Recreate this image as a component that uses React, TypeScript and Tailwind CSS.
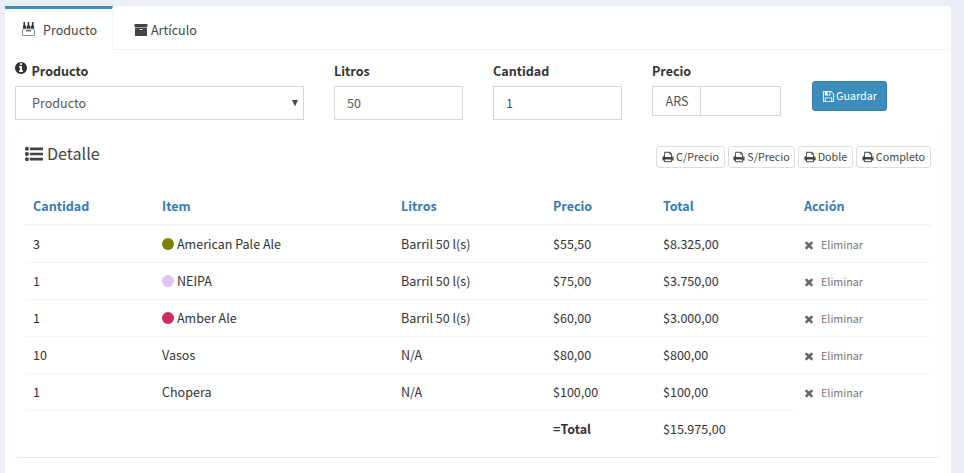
import type { ReactNode } from 'react';

type IconProps = { className: string };

function Glyph({ className, d }: IconProps & { d: string }) {
  return (
    <svg viewBox="0 0 1792 1792" fill="currentColor" className={`shrink-0 ${className}`} aria-hidden="true">
      <path d={d} />
    </svg>
  );
}

const PRINT =
  'M448 1536h896v-256h-896v256zm0-640h896v-384h-160q-40 0-68-28t-28-68v-160h-640v640zm1152 64q0-26-19-45t-45-19-45 19-19 45 19 45 45 19 45-19 19-45zm128 0v416q0 13-9.500 22.500t-22.500 9.500h-224v160q0 40-28 68t-68 28h-960q-40 0-68-28t-28-68v-160h-224q-13 0-22.500-9.500t-9.500-22.500v-416q0-79 56.500-135.500t135.500-56.500h64v-544q0-40 28-68t68-28h672q40 0 88 20t76 48l152 152q28 28 48 76t20 88v256h64q79 0 135.500 56.500t56.500 135.500z';
const FLOPPY =
  'M512 1536h768v-384h-768v384zm896 0h128v-896q0-14-10-38.500t-20-34.500l-281-281q-10-10-34-20t-39-10v416q0 40-28 68t-68 28h-576q-40 0-68-28t-28-68v-416h-128v1280h128v-416q0-40 28-68t68-28h832q40 0 68 28t28 68v416zm-384-928v-320q0-13-9.500-22.500t-22.500-9.500h-192q-13 0-22.500 9.500t-9.500 22.500v320q0 13 9.500 22.500t22.500 9.500h192q13 0 22.500-9.500t9.500-22.500zm640 32v928q0 40-28 68t-68 28h-1344q-40 0-68-28t-28-68v-1344q0-40 28-68t68-28h928q40 0 88 20t76 48l280 280q28 28 48 76t20 88z';
const ARCHIVE =
  'M1088 832q0-26-19-45t-45-19h-256q-26 0-45 19t-19 45 19 45 45 19h256q26 0 45-19t19-45zm576-192v960q0 26-19 45t-45 19h-1408q-26 0-45-19t-19-45v-960q0-26 19-45t45-19h1408q26 0 45 19t19 45zm64-448v256q0 26-19 45t-45 19h-1536q-26 0-45-19t-19-45v-256q0-26 19-45t45-19h1536q26 0 45 19t19 45z';
const INFO =
  'M1152 1376v-160q0-14-9-23t-23-9h-96v-512q0-14-9-23t-23-9h-320q-14 0-23 9t-9 23v160q0 14 9 23t23 9h96v320h-96q-14 0-23 9t-9 23v160q0 14 9 23t23 9h448q14 0 23-9t9-23zm-128-896v-160q0-14-9-23t-23-9h-192q-14 0-23 9t-9 23v160q0 14 9 23t23 9h192q14 0 23-9t9-23zm640 416q0 209-103 385.500t-279.500 279.500-385.500 103-385.500-103-279.500-279.500-103-385.500 103-385.500 279.500-279.500 385.500-103 385.500 103 279.500 279.500 103 385.500z';
const TIMES =
  'M1490 1322q0 40-28 68l-136 136q-28 28-68 28t-68-28l-294-294-294 294q-28 28-68 28t-68-28l-136-136q-28-28-28-68t28-68l294-294-294-294q-28-28-28-68t28-68l136-136q28-28 68-28t68 28l294 294 294-294q28-28 68-28t68 28l136 136q28 28 28 68t-28 68l-294 294 294 294q28 28 28 68z';

function ListIcon({ className }: IconProps) {
  return (
    <svg viewBox="0 0 1792 1792" fill="currentColor" className={`shrink-0 ${className}`} aria-hidden="true">
      {[384, 896, 1408].map((y) => (
        <g key={y}>
          <circle cx="192" cy={y} r="200" />
          <rect x="480" y={y - 130} width="1312" height="260" rx="32" />
        </g>
      ))}
    </svg>
  );
}

/* Crate with three bottles */
function CrateIcon({ className }: IconProps) {
  return (
    <svg viewBox="0 0 13 14" className={`shrink-0 ${className}`} aria-hidden="true">
      <path
        fill="#333"
        d="M1.500 0h1.600v3l1.100 1.400v2.300H.9V4.400L1.500 3zM5.700 0h1.600v3l.9 1.400v2.300H4.800V4.400L5.700 3zM9.900 0h1.600v3l.6 1.400v2.300H8.800V4.400L9.900 3z"
      />
      <path fill="none" stroke="#8a8a8a" d="M1.200 6.900h10.600l.7 1.200v4.900a.5.500 0 0 1-.5.500H1a.5.500 0 0 1-.5-.5V8.100z" />
      <path fill="#666" d="M4 8h5v1.400H4z" />
    </svg>
  );
}

function Field({ label, children, className }: { label: ReactNode; children: ReactNode; className: string }) {
  return (
    <div className={className}>
      <div className="flex h-[25px] items-start font-bold text-[#333]">{label}</div>
      {children}
    </div>
  );
}

const rows = [
  { qty: '3', item: 'American Pale Ale', dot: 'bg-[#7b800b]', liters: 'Barril 50 l(s)', price: '$55,50', total: '$8.325,00' },
  { qty: '1', item: 'NEIPA', dot: 'bg-[#dcc6f4]', liters: 'Barril 50 l(s)', price: '$75,00', total: '$3.750,00' },
  { qty: '1', item: 'Amber Ale', dot: 'bg-[#cc2d5b]', liters: 'Barril 50 l(s)', price: '$60,00', total: '$3.000,00' },
  { qty: '10', item: 'Vasos', dot: '', liters: 'N/A', price: '$80,00', total: '$800,00' },
  { qty: '1', item: 'Chopera', dot: '', liters: 'N/A', price: '$100,00', total: '$100,00' },
];

const headers = ['Cantidad', 'Item', 'Litros', 'Precio', 'Total', 'Acción'];
const printButtons = [
  { label: 'C/Precio', width: 'w-[69px]' },
  { label: 'S/Precio', width: 'w-[67px]' },
  { label: 'Doble', width: 'w-[55px]' },
  { label: 'Completo', width: 'w-[75px]' },
];

export default function App() {
  return (
    <div className="h-[473px] w-[964px] overflow-hidden bg-[#ebeff5] pl-[5px] pt-[6px] font-['Noto_Sans_CJK_SC','Source_Sans_Pro',sans-serif] text-[12.540px] leading-5 text-[#333]">
      <div className="h-[480px] w-[946px] rounded-tr-[3px] bg-white shadow-[0_1px_1px_rgba(0,0,0,0.1)]">
        <div className="flex h-[44px] text-[#444]">
          <div className="flex w-[108px] items-center border-r border-t-[3px] border-r-[#f4f4f4] border-t-[#3c8dbc] pl-[17px]">
            <CrateIcon className="mb-[2px] h-[14px] w-[13px]" />
            <span className="ml-2">Producto</span>
          </div>
          <div className="flex flex-1 items-center border-b border-b-[#f4f4f4] pl-[21px] pt-[4px]">
            <Glyph className="h-[14px] w-[14px]" d={ARCHIVE} />
            <span className="ml-[3px]">Artículo</span>
          </div>
        </div>

        <div className="px-[10px] pt-[11px]">
          <div className="flex h-[73px]">
            <Field
              className="w-[289px]"
              label={
                <>
                  <Glyph className="-ml-px h-[14px] w-[14px]" d={INFO} />
                  <span className="ml-[3.500px]">Producto</span>
                </>
              }
            >
              <div className="flex h-[34px] items-center justify-between border border-[#d2d6de] pl-4 pr-1 text-[#555]">
                <span>Producto</span>
                <svg viewBox="0 0 8 8" className="h-2 w-2" fill="#444" aria-hidden="true">
                  <path d="M1 1h6L4 7.200z" />
                </svg>
              </div>
            </Field>
            <Field className="ml-[30px] w-[129px]" label="Litros">
              <div className="flex h-[34px] items-center border border-[#d2d6de] pl-3 text-[#555]">50</div>
            </Field>
            <Field className="ml-[30px] w-[129px]" label="Cantidad">
              <div className="flex h-[34px] items-center border border-[#d2d6de] pl-3 text-[#555]">1</div>
            </Field>
            <Field className="ml-[30px] w-[129px]" label="Precio">
              <div className="flex h-[30px] items-center border border-[#d2d6de] text-[#555]">
                <div className="flex h-full w-[48px] items-center justify-center border-r border-[#d2d6de] pl-px">ARS</div>
              </div>
            </Field>
            <button className="ml-[31px] mt-[20px] flex h-[30px] w-[75px] items-center justify-center rounded-[3px] border border-[#367fa9] bg-[#3c8dbc] text-[10.750px] text-white">
              <Glyph className="h-[13px] w-[13px]" d={FLOPPY} />
              <span className="ml-px">Guardar</span>
            </button>
          </div>

          <div className="h-[323px] w-[926px] rounded-[3px] px-[10px] pt-[12px] shadow-[0_1px_1px_rgba(0,0,0,0.1),0_0_1px_rgba(0,0,0,0.05)]">
            <div className="flex h-[42px] items-start justify-between">
              <div className="-mt-[3px] flex items-center text-[16.130px] text-[#444]">
                <ListIcon className="mt-px h-[18px] w-[18px]" />
                <span className="ml-[4px]">Detalle</span>
              </div>
              <div className="flex gap-[3px]">
                {printButtons.map((b) => (
                  <button
                    key={b.label}
                    className={`flex h-[22px] items-center justify-center rounded-[3px] border border-[#ddd] bg-white text-[10.750px] text-[#444] ${b.width}`}
                  >
                    <Glyph className="h-3 w-3" d={PRINT} />
                    <span className="ml-[2px]">{b.label}</span>
                  </button>
                ))}
              </div>
            </div>

            <table className="w-[905px] table-fixed border-separate border-spacing-0 text-left">
              <colgroup>
                <col className="w-[129px]" />
                <col className="w-[239px]" />
                <col className="w-[152px]" />
                <col className="w-[110px]" />
                <col className="w-[141px]" />
                <col className="w-[134px]" />
              </colgroup>
              <thead>
                <tr>
                  {headers.map((h) => (
                    <th key={h} className="h-[38px] border-b-2 border-[#f4f4f4] px-2 py-0 font-bold text-[#337ab7]">
                      {h}
                    </th>
                  ))}
                </tr>
              </thead>
              <tbody className="[&_td]:h-[37px] [&_td]:px-2 [&_td]:py-0">
                {rows.map((r, i) => (
                  <tr key={r.item} className="[&>td]:border-b [&>td]:border-[#f4f4f4]">
                    <td>{r.qty}</td>
                    <td>
                      <div className="flex items-center">
                        {r.dot && <span className={`mr-[3px] h-3 w-3 rounded-full ${r.dot}`} />}
                        {r.item}
                      </div>
                    </td>
                    <td>{r.liters}</td>
                    <td>{r.price}</td>
                    <td>{r.total}</td>
                    <td className={i === rows.length - 1 ? 'border-b-transparent!' : ''}>
                      <div className="flex items-center text-[10.750px] text-[#777]">
                        <Glyph className="-ml-px mt-px h-3 w-3 text-[#666]" d={TIMES} />
                        <span className="ml-[6px] pt-[2px] leading-[18px]">Eliminar</span>
                      </div>
                    </td>
                  </tr>
                ))}
                <tr className="[&>td]:border-b [&>td]:border-transparent">
                  <td colSpan={3} />
                  <td className="font-bold">=Total</td>
                  <td>$15.975,00</td>
                </tr>
              </tbody>
            </table>
          </div>
        </div>
      </div>
    </div>
  );
}
